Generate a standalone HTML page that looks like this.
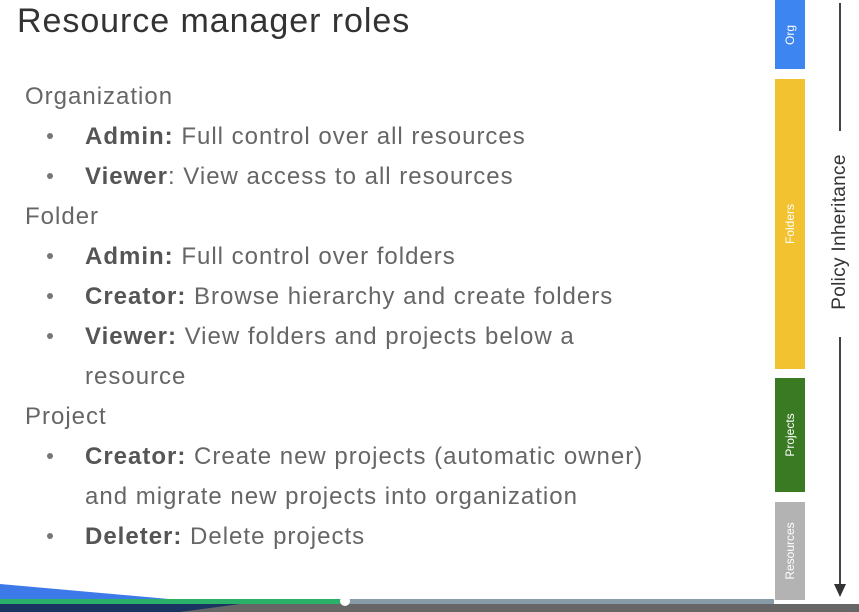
<!DOCTYPE html>
<html><head><style>
html,body{margin:0;padding:0;}
body{width:859px;height:612px;position:relative;overflow:hidden;background:#fff;font-family:"Liberation Sans",Arial,sans-serif;}
.t{position:absolute;white-space:nowrap;color:#666;font-size:24px;letter-spacing:1px;line-height:40px;margin-top:2px;}
.h{position:absolute;left:17px;top:2px;font-size:34px;letter-spacing:0.95px;color:#333;white-space:nowrap;}
b{color:#555;}
.dot{position:absolute;width:6px;height:6px;border-radius:50%;background:#777;}
.box{position:absolute;left:775px;width:30px;}
.vl{position:absolute;color:#fff;font-size:12px;transform:translate(-50%,-50%) rotate(-90deg);white-space:nowrap;}
</style></head><body>
<div class="h">Resource manager roles</div>
<div class="t" style="left:25px;top:75px">Organization</div>
<div class="dot" style="left:47px;top:133px"></div><div class="t" style="left:85px;top:115px"><b>Admin:</b> Full control over all resources</div>
<div class="dot" style="left:47px;top:173px"></div><div class="t" style="left:85px;top:155px"><b>Viewer</b>: View access to all resources</div>
<div class="t" style="left:25px;top:195px">Folder</div>
<div class="dot" style="left:47px;top:253px"></div><div class="t" style="left:85px;top:235px"><b>Admin:</b> Full control over folders</div>
<div class="dot" style="left:47px;top:293px"></div><div class="t" style="left:85px;top:275px"><b>Creator:</b> Browse hierarchy and create folders</div>
<div class="dot" style="left:47px;top:333px"></div><div class="t" style="left:85px;top:315px"><b>Viewer:</b> View folders and projects below a</div>
<div class="t" style="left:85px;top:355px">resource</div>
<div class="t" style="left:25px;top:395px">Project</div>
<div class="dot" style="left:47px;top:453px"></div><div class="t" style="left:85px;top:435px"><b>Creator:</b> Create new projects (automatic owner)</div>
<div class="t" style="left:85px;top:475px">and migrate new projects into organization</div>
<div class="dot" style="left:47px;top:533px"></div><div class="t" style="left:85px;top:515px"><b>Deleter:</b> Delete projects</div>

<div class="box" style="top:0;height:69px;background:#3d85f0"><div class="vl" style="left:15px;top:35px">Org</div></div>
<div class="box" style="top:79px;height:290px;background:#f2c230"><div class="vl" style="left:15px;top:145px">Folders</div></div>
<div class="box" style="top:378px;height:114px;background:#3a7a22"><div class="vl" style="left:15px;top:57px">Projects</div></div>
<div class="box" style="top:502px;height:98px;background:#b3b3b3"><div class="vl" style="left:15px;top:49px">Resources</div></div>

<div style="position:absolute;left:839px;top:3px;width:1.5px;height:128px;background:#444"></div>
<div style="position:absolute;left:840px;top:232px;transform:translate(-50%,-50%) rotate(-90deg);font-size:19px;letter-spacing:0.3px;color:#333;white-space:nowrap">Policy Inheritance</div>
<div style="position:absolute;left:839px;top:337px;width:1.5px;height:250px;background:#444"></div>
<div style="position:absolute;left:834px;top:584px;width:0;height:0;border-left:6px solid transparent;border-right:6px solid transparent;border-top:13px solid #333"></div>

<svg style="position:absolute;left:0;top:580px" width="859" height="32">
<polygon points="0,4 180,20 0,20" fill="#3b7ae8"/>
<rect x="0" y="19" width="344" height="5" fill="#2bb06a"/>
<rect x="344" y="19" width="430" height="5" fill="#8a9ba8"/>
<rect x="0" y="24" width="859" height="8" fill="#666"/>
<polygon points="0,24 240,24 180,32 0,32" fill="#1a3560"/>
<ellipse cx="345" cy="21" rx="5" ry="5" fill="#fff"/>
</svg>
</body></html>
